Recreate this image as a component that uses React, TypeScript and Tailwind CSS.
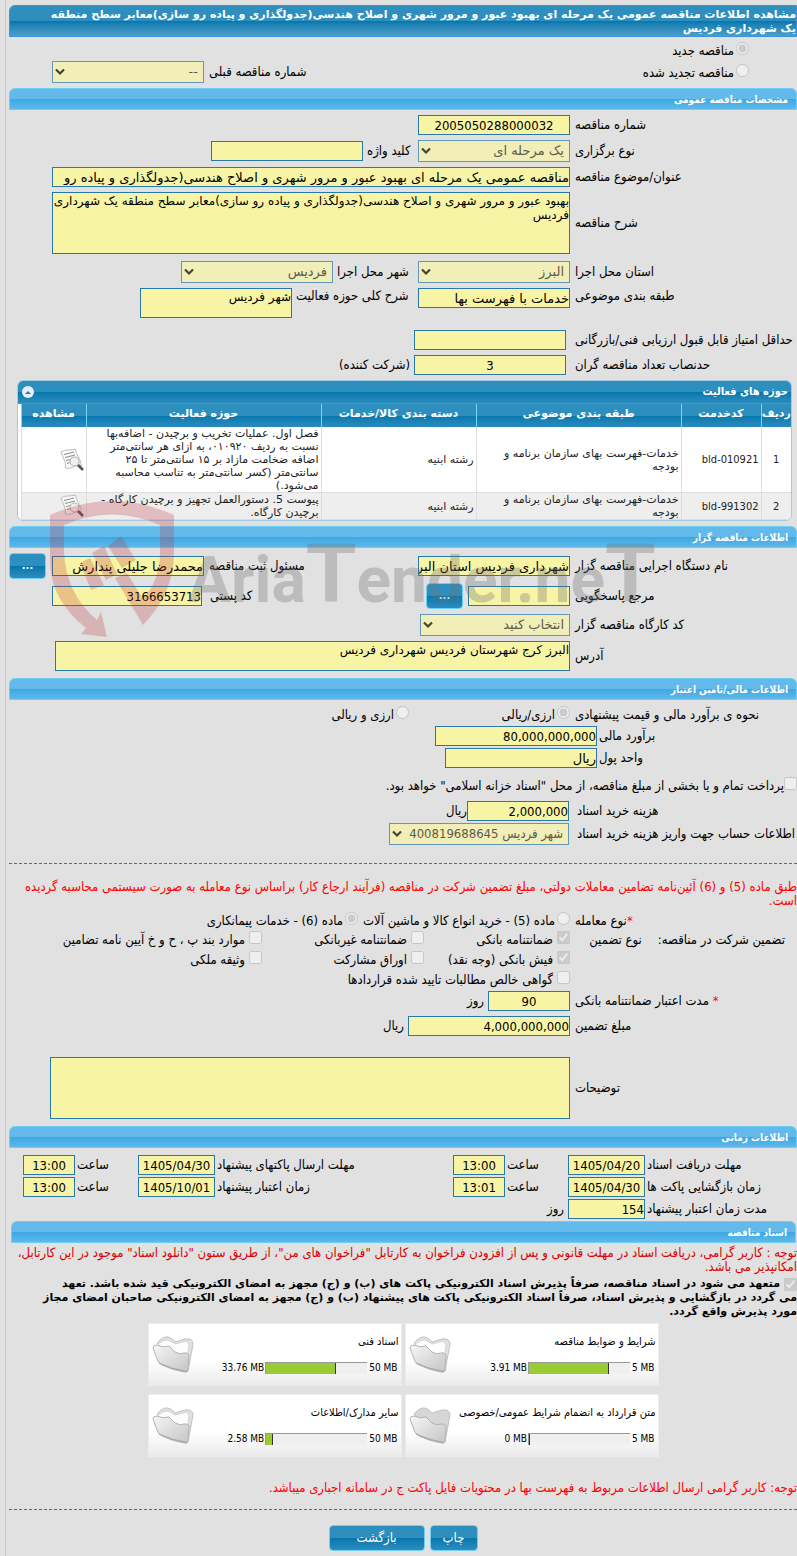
import React from "react";

const WIDE = "font-['DejaVu_Sans',sans-serif]";
const NARROW = "font-['DejaVu_Sans_Condensed','DejaVu_Sans',sans-serif]";

function Section({ title, inset = false }: { title: string; inset?: boolean }) {
  return (
    <h2
      className={`${inset ? "ml-[2px] mr-px" : ""} flex h-[22px] items-center rounded-t-md border border-[#6dcff6] bg-linear-to-b from-[#63baea] from-50% via-[#3ba8e4] via-50% to-[#5fb8ea] px-2 text-[10px] font-bold text-white`}
    >
      {title}
    </h2>
  );
}

function Label({ htmlFor, className, children }: { htmlFor?: string; className: string; children: React.ReactNode }) {
  return (
    <label htmlFor={htmlFor} className={`flex shrink-0 justify-end whitespace-nowrap text-[13px] leading-[16px] ${className}`}>
      <span>{children}</span>
    </label>
  );
}

function Field({ id, value = "", className = "", ltr = false }: { id: string; value?: string; className?: string; ltr?: boolean }) {
  return (
    <input
      id={id}
      readOnly
      defaultValue={value}
      dir={ltr ? "ltr" : "rtl"}
      className={`${ltr ? NARROW : WIDE} h-5 shrink-0 rounded-none border border-[#2878a8] bg-[#f7f4a5] px-0 text-[13px] leading-[18px] text-black outline-none ${className}`}
    />
  );
}

function Area({ id, value = "", className = "" }: { id: string; value?: string; className?: string }) {
  return (
    <textarea
      id={id}
      readOnly
      defaultValue={value}
      className={`${WIDE} block resize-none overflow-hidden rounded-none border border-[#2878a8] bg-[#f7f4a5] p-0 pt-px text-[12px] leading-[14px] outline-none ${className}`}
    />
  );
}

function Select({ id, value, className = "", narrow = false }: { id: string; value: string; className?: string; narrow?: boolean }) {
  return (
    <span className={`relative block h-[22px] shrink-0 ${className}`}>
      <select
        id={id}
        disabled
        defaultValue={value}
        className={`${narrow ? NARROW : WIDE} block h-full w-full appearance-none border border-[#6197b9] bg-[#f1eeb7] pr-[5px] pl-3 text-[13px] leading-5 text-[#5c5b4d] opacity-100`}
      >
        <option>{value}</option>
      </select>
      <svg viewBox="0 0 10 8" className="pointer-events-none absolute top-[7px] left-[3px] h-2 w-[10px]">
        <path d="M1 1.5 5 5.5 9 1.5" fill="none" stroke="#45442f" strokeWidth="2.2" />
      </svg>
    </span>
  );
}

function Choice({ type, name, checked = false, gap = "gap-1", children }: { type: "radio" | "checkbox"; name: string; checked?: boolean; gap?: string; children: React.ReactNode }) {
  return (
    <label className={`flex items-start ${gap} whitespace-nowrap text-[13px] leading-[17px]`}>
      <input type={type} name={name} disabled defaultChecked={checked} className="m-0 h-[13px] w-[13px] shrink-0" />
      <span>{children}</span>
    </label>
  );
}

function GlossButton({ className, children }: { className: string; children: React.ReactNode }) {
  return (
    <button
      type="button"
      className={`flex h-[26px] shrink-0 items-center justify-center rounded border border-[#6dcff6] bg-linear-to-b from-[#2e8fbf] from-50% via-[#0078ae] via-50% to-[#2b8cbd] text-white ${className}`}
    >
      {children}
    </button>
  );
}

function ViewIcon() {
  return (
    <svg viewBox="0 0 24 24" className="h-6 w-6">
      <path d="M1 4Q4 2 8 2Q12 2 15.500 1Q16 6 18.500 9Q21 13 21.500 18Q16 17 12 19.500Q9 21 5.500 20Q6 14 3 9Z" fill="#fafafa" stroke="#bdbdbd" />
      <path d="M4 6.500 14 4M5 9.500 15 7M6 12.500 11 11.500M7 15.500 10 14.500" stroke="#8d8d8d" strokeWidth="1" />
      <circle cx="14.500" cy="13.500" r="4.500" fill="#eeeeee" fillOpacity=".9" stroke="#b8b8b8" strokeWidth="1.200" />
      <path d="m18 17 5 5" stroke="#555" strokeWidth="2.600" />
    </svg>
  );
}

function Folder({ empty = false }: { empty?: boolean }) {
  return (
    <svg viewBox="0 0 42 38" className="h-[38px] w-[42px] shrink-0">
      <defs>
        <linearGradient id="folderFace" x1="0" y1="0" x2="1" y2="1">
          <stop offset="0" stopColor="#f6f6f6" />
          <stop offset="1" stopColor="#c4c4c4" />
        </linearGradient>
      </defs>
      <path d="M5 7Q11 0 16 1Q20 2 23 6L33 3Q41 2 41 8L36 35L30 34Z" fill={empty ? "#d6d6d6" : "#e0e0e0"} stroke="#c2c2c2" />
      {!empty && <path d="M6 8Q14 2 18 5L23 8L35 5L37 9L35 24L28 18L10 14Z" fill="#fdfdfd" stroke="#d5d5d5" />}
      <path d="M1 12Q1 9 5 9Q11 12 17 10Q20 13 23 16Q28 19 32 17Q36 16 37 19L36 34Q36 37 32 36Q20 34 10 29Q6 27 5 23Z" fill="url(#folderFace)" stroke="#b4b4b4" />
      <path d="M7 27Q19 33 35 35.500" stroke="#a2a2a2" fill="none" />
    </svg>
  );
}

function DocCard({ title, used, total, percent, empty }: { title: string; used: string; total: string; percent: number; empty?: boolean }) {
  return (
    <div className="flex h-[63px] w-[254px] flex-row-reverse items-center border border-[#ececec] bg-linear-to-b from-white from-60% to-[#ebebeb] pr-[2px] pl-[3px]">
      <Folder empty={empty} />
      <div className="flex-1 whitespace-nowrap">
        <p className="text-[11px] leading-[14px]">{title}</p>
        <div className="mt-3 flex items-center text-[10px] leading-[14px]" dir="ltr">
          <span className="flex-1 text-right">{used}</span>
          <span className="mx-px block h-3 w-[102px] border-t border-l border-[#999] bg-[#efefef]">
            <span className="block h-full border-r border-[#333] bg-[#9acb32]" style={{ width: `${percent}%` }} />
          </span>
          <span className="px-px">{total}</span>
        </div>
      </div>
    </div>
  );
}

const HEADS: [string, string][] = [
  ["ردیف", "w-[30px]"],
  ["کدخدمت", "w-[80px]"],
  ["طبقه بندی موضوعی", "w-[205px]"],
  ["دسته بندی کالا/خدمات", "w-[155px]"],
  ["حوزه فعالیت", "w-[235px]"],
  ["مشاهده", "w-[65px]"],
];

const ROWS = [
  {
    code: "bld-010921",
    area: "فصل اول. عملیات تخریب و برچیدن - اضافه‌بها نسبت به ردیف ۰۱۰۹۲۰، به ازای هر سانتی‌متر اضافه ضخامت مازاد بر ۱۵ سانتی‌متر تا ۲۵ سانتی‌متر (کسر سانتی‌متر به تناسب محاسبه می‌شود.)",
  },
  { code: "bld-991302", area: "پیوست 5. دستورالعمل تجهیز و برچیدن کارگاه - برچیدن کارگاه." },
];

function ActivityTable() {
  return (
    <div className="mt-[5px] mr-[5px] ml-2 overflow-hidden rounded-md border border-[#a6c9e2] bg-white">
      <div className="flex h-[23px] items-center justify-between border-b border-[#4297d7] bg-linear-to-b from-[#2e8fbf] from-50% via-[#0078ae] via-50% to-[#2b8cbd] pr-[3px] pl-1 text-[11px] font-bold text-white">
        <span>حوزه های فعالیت</span>
        <button type="button" aria-label="بستن" className="flex h-3 w-3 items-center justify-center rounded-full bg-[#e3effa]">
          <svg viewBox="0 0 6 3" className="h-[3px] w-[6px]">
            <path d="M0 3 3 0 6 3Z" fill="#217bc0" />
          </svg>
        </button>
      </div>
      <table className={`${WIDE} ml-[3px] w-[calc(100%-3px)] table-fixed border-collapse text-[11px] leading-[13px] text-[#222]`}>
        <thead>
          <tr className="h-[23px] bg-linear-to-b from-[#2e8fbf] from-50% via-[#0078ae] via-50% to-[#2b8cbd] text-white">
            {HEADS.map(([name, width]) => (
              <th key={name} className={`${width} border-l border-[#77d5f7] p-0 pb-1 whitespace-nowrap`}>
                {name}
              </th>
            ))}
          </tr>
        </thead>
        <tbody>
          {ROWS.map((row, i) => (
            <tr key={row.code} className={`border-b border-[#ddd] ${i ? "bg-[#eeeeee]" : "bg-white"}`}>
              <td className={`${NARROW} border-l border-[#ddd] p-0 text-center`}>{i + 1}</td>
              <td className={`${NARROW} border-l border-[#ddd] px-[2px] py-0 text-right`}>
                <bdi>{row.code}</bdi>
              </td>
              <td className="border-l border-[#ddd] px-[2px] py-0">
                خدمات-فهرست بهای سازمان برنامه و
                <br />
                بودجه
              </td>
              <td className="border-l border-[#ddd] px-[2px] py-0">رشته ابنیه</td>
              <td className="border-l border-[#ddd] px-[2px] py-0">{row.area}</td>
              <td className="border-l border-[#ddd] p-0 pr-[2px]">
                <ViewIcon />
              </td>
            </tr>
          ))}
        </tbody>
      </table>
    </div>
  );
}

function Watermark() {
  return (
    <svg
      viewBox="0 0 620 150"
      direction="ltr"
      aria-hidden="true"
      className="pointer-events-none absolute top-[495px] left-[45px] h-[150px] w-[620px]"
    >
      <g fill="#c0323c" fillOpacity=".26">
        <path d="M5 20Q67-8 129 20V58Q129 98 98 130L70 83 82 78 98 104Q115 85 115 58V30Q67 9 19 30V55Q20 98 52 125L56 117 62 142 36 139 41 133Q5 105 5 65Z" />
        <path d="M35 68 45 63 59 90 46 95ZM47 58 59 51 72 79 61 85ZM63 51 76 41 91 65 77 73Z" />
      </g>
      <text x="143" y="107" fontSize="64" fontWeight="700" fill="#707070" fillOpacity=".32" fontFamily="Roboto, sans-serif">
        Aria
        <tspan fontSize="82">T</tspan>
        ender.ne
        <tspan fontSize="82">T</tspan>
      </text>
    </svg>
  );
}

function Deadline({ id, label, date, time, width }: { id: string; label: string; date: string; time: string; width: string }) {
  return (
    <>
      <Label htmlFor={`${id}-date`} className={`${width} pl-[2px]`}>{label}</Label>
      <Field id={`${id}-date`} value={date} ltr className="w-[77px] text-center" />
      <Label htmlFor={`${id}-time`} className="w-[63px] pl-[2px]">ساعت</Label>
      <Field id={`${id}-time`} value={time} ltr className="w-[52px] text-center" />
    </>
  );
}

export default function App() {
  return (
    <div dir="rtl" className={`relative min-h-screen overflow-hidden bg-[#e1e1e1] pl-[5px] text-black ${NARROW}`}>
      <main className="min-h-screen border-l border-[#c8c8c8] pt-[5px] pb-[5px] pl-[3px]">
        <h1 className={`${WIDE} h-8 rounded-tl-md border border-[#3a93dc] bg-linear-to-b from-[#2e8fbf] from-50% via-[#0078ae] via-50% to-[#4a9fc8] pt-[2px] text-[11px] leading-[14px] font-bold text-white`}>
          مشاهده اطلاعات مناقصه عمومی یک مرحله ای بهبود عبور و مرور شهری و اصلاح هندسی(جدولگذاری و پیاده رو سازی)معابر سطح منطقه
          <br />
          یک شهرداری فردیس
        </h1>

        <div className="mt-[5px] pr-12">
          <Choice type="radio" name="kind" checked gap="gap-[2px]">مناقصه جدید</Choice>
        </div>
        <div className="mt-[2px] flex items-center pr-12">
          <Choice type="radio" name="kind" gap="gap-[2px]">مناقصه تجدید شده</Choice>
          <Label htmlFor="prev" className="mr-auto pl-[5px]">شماره مناقصه قبلی</Label>
          <Select id="prev" value="--" className="ml-[43px] w-[152px]" />
        </div>

        <div className="mt-[5px]"><Section title="مشخصات مناقصه عمومی" /></div>
        <div className="mt-[5px] flex items-center">
          <Label htmlFor="num" className="w-[227px] pl-[5px]">شماره مناقصه</Label>
          <Field id="num" value="2005050288000032" ltr className="w-[152px] text-center" />
        </div>
        <div className="mt-[5px] flex items-center">
          <Label htmlFor="method" className="w-[227px] pl-[5px]">نوع برگزاری</Label>
          <Select id="method" value="یک مرحله ای" className="w-[152px]" />
          <Label htmlFor="keyword" className="w-[55px] pl-1">کلید واژه</Label>
          <Field id="keyword" className="w-[152px]" />
        </div>
        <div className="mt-[5px] flex items-center">
          <Label htmlFor="subject" className="w-[227px] pl-[5px]">عنوان/موضوع مناقصه</Label>
          <Field id="subject" value="مناقصه عمومی یک مرحله ای بهبود عبور و مرور شهری و اصلاح هندسی(جدولگذاری و پیاده رو" className="ml-[43px] min-w-0 flex-1" />
        </div>
        <div className="mt-[5px] flex items-center">
          <Label htmlFor="desc" className="w-[227px] pl-[5px]">شرح مناقصه</Label>
          <Area id="desc" value="بهبود عبور و مرور شهری و اصلاح هندسی(جدولگذاری و پیاده رو سازی)معابر سطح منطقه یک شهرداری فردیس" className="ml-[43px] h-[62px] flex-1" />
        </div>
        <div className="mt-[7px] flex items-center">
          <Label htmlFor="province" className="w-[227px] pl-[5px]">استان محل اجرا</Label>
          <Select id="province" value="البرز" className="w-[152px]" />
          <Label htmlFor="city" className="w-[85px] pl-1">شهر محل اجرا</Label>
          <Select id="city" value="فردیس" className="w-[152px]" />
        </div>
        <div className="mt-[5px] flex items-start">
          <Label htmlFor="topic" className="w-[227px] pl-[5px]">طبقه بندی موضوعی</Label>
          <Field id="topic" value="خدمات با فهرست بها" className="w-[152px]" />
          <Label htmlFor="scope" className="w-[126px] pl-1">شرح کلی حوزه فعالیت</Label>
          <Area id="scope" value="شهر فردیس" className="h-[30px] w-[152px]" />
        </div>
        <div className="mt-3 flex items-center">
          <Label htmlFor="score" className="w-[231px] pl-[9px]">حداقل امتیاز قابل قبول ارزیابی فنی/بازرگانی</Label>
          <Field id="score" className="w-[152px]" />
        </div>
        <div className="mt-[5px] flex items-center">
          <Label htmlFor="quorum" className="w-[231px] pl-[9px]">حدنصاب تعداد مناقصه گران</Label>
          <Field id="quorum" value="3" ltr className="w-[152px] text-center" />
          <span className="pr-1 text-[13px] leading-[16px]">(شرکت کننده)</span>
        </div>

        <ActivityTable />

        <div className="mt-[5px]"><Section title="اطلاعات مناقصه گزار" /></div>
        <div className="mt-[5px] flex items-center">
          <Label htmlFor="org" className="w-[227px] pl-[5px]">نام دستگاه اجرایی مناقصه گزار</Label>
          <Field id="org" value="شهرداری فردیس استان البرز" className="w-[152px]" />
          <Label htmlFor="clerk" className="w-[214px] pl-[5px]">مسئول ثبت مناقصه</Label>
          <Field id="clerk" value="محمدرضا جلیلی پندارش" className="w-[152px]" />
          <GlossButton className="mr-[6px] w-[37px] text-[11px] font-bold">...</GlossButton>
        </div>
        <div className="mt-1 flex items-center">
          <Label htmlFor="contact" className="w-[227px] pl-[5px]">مرجع پاسخگویی</Label>
          <Field id="contact" className="w-[102px]" />
          <GlossButton className="mr-[5px] w-[37px] text-[11px] font-bold">...</GlossButton>
          <Label htmlFor="postal" className="w-[224px] pl-2">کد پستی</Label>
          <Field id="postal" value="3166653713" ltr className="w-[150px] text-right" />
        </div>
        <div className="mt-[5px] flex items-center">
          <Label htmlFor="workshop" className="w-[227px] pl-[5px]">کد کارگاه مناقصه گزار</Label>
          <Select id="workshop" value="انتخاب کنید" className="w-[150px]" />
        </div>
        <div className="mt-[5px] flex items-center">
          <Label htmlFor="address" className="w-[227px] pl-[5px]">آدرس</Label>
          <Area id="address" value="البرز کرج شهرستان فردیس شهرداری فردیس" className="ml-[46px] h-[30px] flex-1" />
        </div>

        <div className="mt-[7px]"><Section title="اطلاعات مالی/تامین اعتبار" /></div>
        <div className="mt-[6px] flex">
          <span className="flex w-[227px] shrink-0 justify-end pl-[5px] text-[13px] leading-[17px] whitespace-nowrap">نحوه ی برآورد مالی و قیمت پیشنهادی</span>
          <div className="w-[161px]"><Choice type="radio" name="currency" checked gap="gap-[2px]">ارزی/ریالی</Choice></div>
          <Choice type="radio" name="currency" gap="gap-[2px]">ارزی و ریالی</Choice>
        </div>
        <div className="mt-[3px] flex items-center">
          <Label htmlFor="estimate" className="w-[200px] pl-[2px]">برآورد مالی</Label>
          <Field id="estimate" value="80,000,000,000" ltr className="w-[162px] text-right" />
        </div>
        <div className="mt-[2px] flex items-center">
          <Label htmlFor="unit" className="w-[200px] pl-[2px]">واحد پول</Label>
          <Field id="unit" value="ریال" className="w-[152px]" />
        </div>
        <div className="mt-[9px]">
          <Choice type="checkbox" name="treasury" gap="gap-0">پرداخت تمام و یا بخشی از مبلغ مناقصه، از محل "اسناد خزانه اسلامی" خواهد بود.</Choice>
        </div>
        <div className="mt-[7px] flex items-center">
          <Label htmlFor="fee" className="w-[228px] pl-2">هزینه خرید اسناد</Label>
          <Field id="fee" value="2,000,000" ltr className="w-[102px] text-right" />
          <span className="text-[13px] leading-[16px]">ریال</span>
        </div>
        <div className="mt-[2px] flex items-center">
          <Label htmlFor="account" className="w-[228px] pl-2">اطلاعات حساب جهت واریز هزینه خرید اسناد</Label>
          <Select id="account" narrow value="شهر فردیس 400819688645" className="w-[180px]" />
        </div>

        <div className="mt-[18px] border-t border-dashed border-[#2878a8]" />
        <p className="mt-4 text-[13px] leading-[14px] text-[#ff0000]">
          طبق ماده (5) و (6) آئین‌نامه تضامین معاملات دولتی، مبلغ تضمین شرکت در مناقصه (فرآیند ارجاع کار) براساس نوع معامله به صورت سیستمی محاسبه گردیده
          <br />
          است.
        </p>
        <div className="mt-1 flex">
          <span className="flex w-[227px] shrink-0 justify-end pl-[5px] text-[13px] leading-[17px]"><span><span className="text-[#ff0000]">*</span>نوع معامله</span></span>
          <div className="w-[212px]"><Choice type="radio" name="deal" gap="gap-[2px]">ماده (5) - خرید انواع کالا و ماشین آلات</Choice></div>
          <Choice type="radio" name="deal" checked gap="gap-[2px]">ماده (6) - خدمات پیمانکاری</Choice>
        </div>
        <div className="mt-[2px] flex">
          <div className="flex w-[227px] shrink-0 gap-4 pr-3 text-[13px] leading-[17px] whitespace-nowrap">
            <span>تضمین شرکت در مناقصه:</span>
            <span>نوع تضمین</span>
          </div>
          <div className="grid grid-cols-[146px_162px_auto] gap-y-[3px]">
            <Choice type="checkbox" name="g1" checked>ضمانتنامه بانکی</Choice>
            <Choice type="checkbox" name="g2">ضمانتنامه غیربانکی</Choice>
            <Choice type="checkbox" name="g3">موارد بند پ ، ح و خ آیین نامه تضامین</Choice>
            <Choice type="checkbox" name="g4" checked>فیش بانکی (وجه نقد)</Choice>
            <Choice type="checkbox" name="g5">اوراق مشارکت</Choice>
            <Choice type="checkbox" name="g6">وثیقه ملکی</Choice>
            <div className="col-span-2"><Choice type="checkbox" name="g7">گواهی خالص مطالبات تایید شده قراردادها</Choice></div>
          </div>
        </div>
        <div className="mt-[3px] flex items-center">
          <Label htmlFor="validity" className="w-[227px] pl-[5px]"><span className="text-[#ff0000]">*</span> مدت اعتبار ضمانتنامه بانکی</Label>
          <Field id="validity" value="90" ltr className="w-[82px] text-center" />
          <span className="pr-1 text-[13px] leading-[16px]">روز</span>
        </div>
        <div className="mt-[5px] flex items-center">
          <Label htmlFor="amount" className="w-[227px] pl-[5px]">مبلغ تضمین</Label>
          <Field id="amount" value="4,000,000,000" ltr className="w-[162px] text-right" />
          <span className="pr-1 text-[13px] leading-[16px]">ریال</span>
        </div>
        <div className="mt-[21px] flex items-center">
          <Label htmlFor="notes" className="w-[227px] pl-[5px]">توضیحات</Label>
          <Area id="notes" className="ml-[41px] h-[62px] flex-1" />
        </div>

        <div className="mt-[7px]"><Section title="اطلاعات زمانی" /></div>
        <div className="mt-[7px] flex items-center">
          <Deadline id="receive" label="مهلت دریافت اسناد" date="1405/04/20" time="13:00" width="w-[152px]" />
          <Deadline id="send" label="مهلت ارسال پاکتهای پیشنهاد" date="1405/04/30" time="13:00" width="w-[238px]" />
        </div>
        <div className="mt-[2px] flex items-center">
          <Deadline id="open" label="زمان بازگشایی پاکت ها" date="1405/04/30" time="13:01" width="w-[152px]" />
          <Deadline id="expire" label="زمان اعتبار پیشنهاد" date="1405/10/01" time="13:00" width="w-[238px]" />
        </div>
        <div className="mt-[2px] flex items-center">
          <Label htmlFor="duration" className="w-[152px] pl-[2px]">مدت زمان اعتبار پیشنهاد</Label>
          <Field id="duration" value="154" ltr className="w-[77px] text-right" />
          <span className="pr-1 text-[13px] leading-[16px]">روز</span>
        </div>

        <div className="mt-[2px]"><Section inset title="اسناد مناقصه" /></div>
        <p className="mt-[3px] text-[13px] leading-[14px] text-[#dd0000]">
          توجه : کاربر گرامی، دریافت اسناد در مهلت قانونی و پس از افزودن فراخوان به کارتابل "فراخوان های من"، از طریق ستون "دانلود اسناد" موجود در این کارتابل،
          <br />
          امکانپذیر می باشد.
        </p>
        <label className={`${WIDE} mt-[3px] block text-[11px] leading-[14px] font-bold`}>
          <input type="checkbox" disabled defaultChecked className="m-0 ml-1 h-[13px] w-[13px] align-bottom" />
          متعهد می شود در اسناد مناقصه، صرفاً پذیرش اسناد الکترونیکی پاکت های (ب) و (ج) مجهز به امضای الکترونیکی قید شده باشد. تعهد
          <br />
          می گردد در بازگشایی و پذیرش اسناد، صرفاً اسناد الکترونیکی پاکت های پیشنهاد (ب) و (ج) مجهز به امضای الکترونیکی صاحبان امضای مجاز
          <br />
          مورد پذیرش واقع گردد.
        </label>

        <div className="mt-1 grid grid-cols-[254px_254px] justify-center gap-x-[3px] gap-y-2">
          <DocCard title="شرایط و ضوابط مناقصه" used="3.91 MB" total="5 MB" percent={79} />
          <DocCard title="اسناد فنی" used="33.76 MB" total="50 MB" percent={69} />
          <DocCard title="متن قرارداد به انضمام شرایط عمومی/خصوصی" used="0 MB" total="5 MB" percent={0} empty />
          <DocCard title="سایر مدارک/اطلاعات" used="2.58 MB" total="50 MB" percent={7} />
        </div>

        <p className="mt-6 text-[13px] leading-[14px] text-[#ff0000]">
          توجه: کاربر گرامی ارسال اطلاعات مربوط به فهرست بها در محتویات فایل پاکت ج در سامانه اجباری میباشد.
        </p>
        <div className="mt-[14px] border-t border-dashed border-[#2878a8]" />
        <div className="mt-[15px] flex justify-center gap-[5px] text-[13px]">
          <GlossButton className="w-12">چاپ</GlossButton>
          <GlossButton className="w-24">بازگشت</GlossButton>
        </div>
      </main>
      <Watermark />
    </div>
  );
}
